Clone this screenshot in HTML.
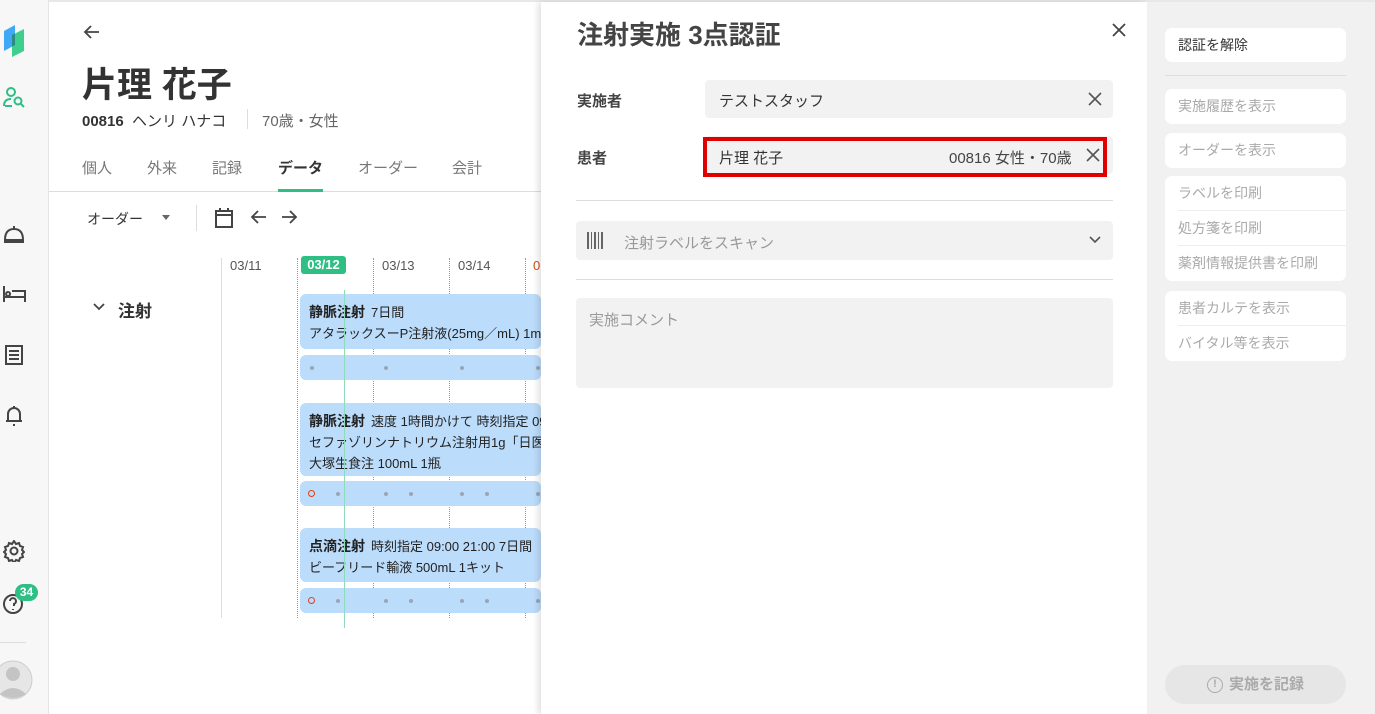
<!DOCTYPE html><html><head><meta charset="utf-8"><style>
*{box-sizing:border-box;margin:0;padding:0}
body{width:1375px;height:714px;overflow:hidden;position:relative;font-family:"Liberation Sans","Noto Sans CJK JP",sans-serif;background:#fff;color:#333}
.a{position:absolute}
.side{left:0;top:0;width:49px;height:714px;background:#f7f7f7;border-right:1px solid #e4e4e4}
.tab{top:157px;font-size:15px;color:#777}
.date{top:258px;font-size:13px;color:#555}
.vl{border-left:1px dotted #999;top:258px;height:360px;width:0}
.card{left:300px;width:250px;background:#bcdcfb;border-radius:6px;font-size:13px;color:#222;padding:8px 9px;line-height:21px}
.card b{font-size:14px;margin-right:6px}
.dots{left:300px;width:250px;height:25px;background:#bcdcfb;border-radius:6px}
.dt{position:absolute;top:11px;width:4px;height:4px;border-radius:50%;background:#9aa5b5}
.ro{position:absolute;top:9px;width:7px;height:7px;border-radius:50%;border:1.5px solid #e0401a}
.fld{background:#f2f2f2;border-radius:4px}
.btn{left:1165px;width:181px;background:#fff;border-radius:7px;font-size:14px;color:#aaa;padding-left:13px}
.btn div{height:35px;line-height:35px;border-bottom:1px solid #eee}
.btn div:last-child{border-bottom:none}
</style></head><body>
<div class="a" style="left:0;top:0;width:1375px;height:2px;background:#e8e8e8"></div>
<div class="a side"></div>
<svg class="a" style="left:3px;top:23px" width="22" height="36" viewBox="0 0 22 36"><path d="M1 8 L12 2 V22 L1 28Z" fill="#3fa9f5"/><path d="M9 12 L21 6 V28 L9 34Z" fill="#3ecf8e"/><path d="M9 12 L12 10.5 V22 L9 23.5Z" fill="#2d8a80"/></svg>
<svg class="a" style="left:2px;top:86px" width="24" height="22" fill="none" stroke="#2fbf85" stroke-width="2"><circle cx="9" cy="6" r="4"/><path d="M2 20 Q2 13 9 13"/><circle cx="16" cy="15" r="3.5"/><path d="M19 18l3 3M3 20h7"/></svg>
<svg class="a" style="left:3px;top:224px" width="22" height="20" fill="none" stroke="#444" stroke-width="2"><path d="M2 16 Q2 5 11 5 Q20 5 20 16Z M1 18h20 M11 2v3"/></svg>
<svg class="a" style="left:2px;top:284px" width="24" height="20" fill="none" stroke="#444" stroke-width="2"><path d="M2 2v16M2 13h21v5M6 8a2 2 0 1 0 .1 0M10 7h13v6"/></svg>
<svg class="a" style="left:4px;top:344px" width="20" height="22" fill="none" stroke="#444" stroke-width="2"><rect x="2" y="2" width="16" height="18"/><path d="M5 7h10M5 11h10M5 15h10"/></svg>
<svg class="a" style="left:4px;top:404px" width="20" height="24" fill="none" stroke="#444" stroke-width="2"><path d="M4 17V10a6 6 0 0 1 12 0v7h2M2 17h16M10 20v2M10 2v2"/></svg>
<svg class="a" style="left:3px;top:540px" width="22" height="22" fill="none" stroke="#444" stroke-width="2"><circle cx="11" cy="11" r="3.5"/><path d="M11 1l2 3 3-1 1 3 3 1-1 3 2 2-2 2 1 3-3 1-1 3-3-1-2 3-2-3-3 1-1-3-3-1 1-3-2-2 2-2-1-3 3-1 1-3 3 1z"/></svg>
<svg class="a" style="left:3px;top:592px" width="22" height="24" fill="none" stroke="#444" stroke-width="2"><circle cx="10" cy="12" r="9"/><path d="M7 9a3 3 0 1 1 4 3v2M10 17v1"/></svg>
<div class="a" style="left:15px;top:584px;width:23px;height:17px;border-radius:9px;background:#2fbf85;color:#fff;font-size:12px;font-weight:bold;text-align:center;line-height:17px">34</div>
<div class="a" style="left:0;top:642px;width:26px;height:1px;background:#ddd"></div>
<svg class="a" style="left:0;top:660px" width="34" height="40"><circle cx="13" cy="20" r="19" fill="#e6e6e6" stroke="#ccc"/><circle cx="13" cy="14" r="7" fill="#c4c4c4"/><path d="M0 34 Q13 22 26 34 Q13 42 0 34Z" fill="#c4c4c4"/></svg>

<svg class="a" style="left:82px;top:23px" width="20" height="18" fill="none" stroke="#444" stroke-width="1.8"><path d="M17 9H3M9 3L3 9l6 6"/></svg>
<div class="a" style="left:82px;top:57px;font-size:35px;font-weight:bold;color:#333">片理 花子</div>
<div class="a" style="left:82px;top:110px;font-size:15px;color:#333"><b>00816</b>&nbsp; ヘンリ ハナコ</div>
<div class="a" style="left:247px;top:109px;width:1px;height:20px;background:#ddd"></div>
<div class="a" style="left:262px;top:110px;font-size:15px;color:#666">70歳・女性</div>
<div class="a tab" style="left:82px">個人</div><div class="a tab" style="left:147px">外来</div><div class="a tab" style="left:212px">記録</div>
<div class="a tab" style="left:278px;color:#333;font-weight:bold">データ</div><div class="a tab" style="left:358px">オーダー</div><div class="a tab" style="left:452px">会計</div>
<div class="a" style="left:49px;top:191px;width:492px;height:1px;background:#ddd"></div>
<div class="a" style="left:278px;top:189px;width:45px;height:3px;background:#2fbf85"></div>
<div class="a" style="left:87px;top:209px;font-size:14px;color:#333">オーダー</div>
<div class="a" style="left:162px;top:215px;border:4px solid transparent;border-top:5px solid #666"></div>
<div class="a" style="left:196px;top:205px;width:1px;height:26px;background:#ddd"></div>
<svg class="a" style="left:214px;top:207px" width="20" height="22" fill="none" stroke="#444" stroke-width="2"><rect x="2" y="4" width="16" height="16"/><path d="M2 8h16M6 1v4M14 1v4"/></svg>
<svg class="a" style="left:250px;top:208px" width="18" height="18" fill="none" stroke="#444" stroke-width="1.8"><path d="M16 9H2M8 3L2 9l6 6"/></svg>
<svg class="a" style="left:280px;top:208px" width="18" height="18" fill="none" stroke="#444" stroke-width="1.8"><path d="M2 9h14M10 3l6 6-6 6"/></svg>

<div class="a" style="left:221px;top:258px;width:1px;height:360px;background:#ddd"></div>
<div class="a vl" style="left:297px"></div><div class="a vl" style="left:373px"></div><div class="a vl" style="left:449px"></div><div class="a vl" style="left:525px"></div>
<div class="a date" style="left:230px">03/11</div>
<div class="a" style="left:301px;top:256px;width:45px;height:18px;background:#2fbf85;border-radius:3px;color:#fff;font-size:13px;font-weight:bold;text-align:center;line-height:18px">03/12</div>
<div class="a date" style="left:382px">03/13</div><div class="a date" style="left:458px">03/14</div><div class="a date" style="left:533px;color:#d0501a">0</div>
<svg class="a" style="left:92px;top:301px" width="14" height="12" fill="none" stroke="#444" stroke-width="1.8"><path d="M2 3l5 5 5-5"/></svg>
<div class="a" style="left:118px;top:297px;font-size:17px;font-weight:bold;color:#333">注射</div>

<div class="a card" style="top:294px;height:55px;white-space:nowrap;overflow:hidden;width:241px"><b>静脈注射</b>7日間<br>アタラックスーP注射液(25mg／mL) 1mL</div>
<div class="a dots" style="top:355px;width:241px"><i class="dt" style="left:10px"></i><i class="dt" style="left:84px"></i><i class="dt" style="left:160px"></i><i class="dt" style="left:236px"></i></div>
<div class="a card" style="top:403px;height:73px;white-space:nowrap;overflow:hidden;width:241px"><b>静脈注射</b>速度 1時間かけて 時刻指定 09<br>セファゾリンナトリウム注射用1g「日医工」<br>大塚生食注 100mL 1瓶</div>
<div class="a dots" style="top:481px;width:241px"><i class="ro" style="left:8px"></i><i class="dt" style="left:36px"></i><i class="dt" style="left:84px"></i><i class="dt" style="left:109px"></i><i class="dt" style="left:160px"></i><i class="dt" style="left:185px"></i><i class="dt" style="left:236px"></i></div>
<div class="a card" style="top:528px;height:54px;white-space:nowrap;overflow:hidden;width:241px"><b>点滴注射</b>時刻指定 09:00 21:00 7日間<br>ビーフリード輸液 500mL 1キット</div>
<div class="a dots" style="top:588px;width:241px"><i class="ro" style="left:8px"></i><i class="dt" style="left:36px"></i><i class="dt" style="left:84px"></i><i class="dt" style="left:109px"></i><i class="dt" style="left:160px"></i><i class="dt" style="left:185px"></i><i class="dt" style="left:236px"></i></div>
<div class="a" style="left:344px;top:290px;width:1px;height:338px;background:#8fd9bd"></div>

<div class="a" style="left:541px;top:2px;width:606px;height:712px;background:#fff;box-shadow:-3px 0 6px rgba(0,0,0,.12)"></div>
<div class="a" style="left:577px;top:15px;font-size:26px;font-weight:bold;color:#444">注射実施 3点認証</div>
<svg class="a" style="left:1111px;top:22px" width="16" height="16" stroke="#444" stroke-width="1.8"><path d="M2 2l12 12M14 2L2 14"/></svg>
<div class="a" style="left:577px;top:90px;font-size:15px;font-weight:bold;color:#444">実施者</div>
<div class="a fld" style="left:705px;top:80px;width:408px;height:38px"></div>
<div class="a" style="left:719px;top:90px;font-size:15px;color:#333">テストスタッフ</div>
<svg class="a" style="left:1088px;top:92px" width="14" height="14" stroke="#555" stroke-width="1.6"><path d="M1 1l12 12M13 1L1 13"/></svg>
<div class="a" style="left:577px;top:147px;font-size:15px;font-weight:bold;color:#444">患者</div>
<div class="a fld" style="left:705px;top:136px;width:408px;height:38px"></div>
<div class="a" style="left:703px;top:137px;width:404px;height:40px;border:4px solid #e00000"></div>
<div class="a" style="left:719px;top:147px;font-size:15px;color:#333">片理 花子</div>
<div class="a" style="left:949px;top:147px;font-size:15px;color:#444">00816 女性・70歳</div>
<svg class="a" style="left:1086px;top:148px" width="14" height="14" stroke="#555" stroke-width="1.6"><path d="M1 1l12 12M13 1L1 13"/></svg>
<div class="a" style="left:576px;top:200px;width:537px;height:1px;background:#ddd"></div>
<div class="a fld" style="left:576px;top:221px;width:537px;height:39px"></div>
<svg class="a" style="left:587px;top:232px" width="18" height="17" fill="#666"><rect x="0" y="0" width="2" height="17"/><rect x="4" y="0" width="1" height="17"/><rect x="7" y="0" width="2" height="17"/><rect x="11" y="0" width="1" height="17"/><rect x="14" y="0" width="2" height="17"/></svg>
<div class="a" style="left:624px;top:232px;font-size:15px;color:#999">注射ラベルをスキャン</div>
<svg class="a" style="left:1089px;top:235px" width="12" height="10" fill="none" stroke="#555" stroke-width="1.6"><path d="M1 2l5 5 5-5"/></svg>
<div class="a" style="left:576px;top:279px;width:537px;height:1px;background:#ddd"></div>
<div class="a fld" style="left:576px;top:298px;width:537px;height:90px"></div>
<div class="a" style="left:589px;top:309px;font-size:15px;color:#999">実施コメント</div>

<div class="a" style="left:1147px;top:2px;width:228px;height:712px;background:#f1f1f1"></div>
<div class="a btn" style="top:28px;height:34px;line-height:34px;color:#333">認証を解除</div>
<div class="a" style="left:1165px;top:75px;width:181px;height:1px;background:#ddd"></div>
<div class="a btn" style="top:89px"><div>実施履歴を表示</div></div>
<div class="a btn" style="top:133px"><div>オーダーを表示</div></div>
<div class="a btn" style="top:176px"><div>ラベルを印刷</div><div>処方箋を印刷</div><div>薬剤情報提供書を印刷</div></div>
<div class="a btn" style="top:291px"><div>患者カルテを表示</div><div>バイタル等を表示</div></div>
<div class="a" style="left:1165px;top:665px;width:181px;height:39px;border-radius:20px;background:#e6e6e6;color:#aaa;font-size:15px;font-weight:bold;text-align:center;line-height:39px"><span style="display:inline-block;width:16px;height:16px;border:1.5px solid #aaa;border-radius:50%;font-size:11px;line-height:13px;vertical-align:2px;margin-right:6px">!</span>実施を記録</div>
</body></html>
